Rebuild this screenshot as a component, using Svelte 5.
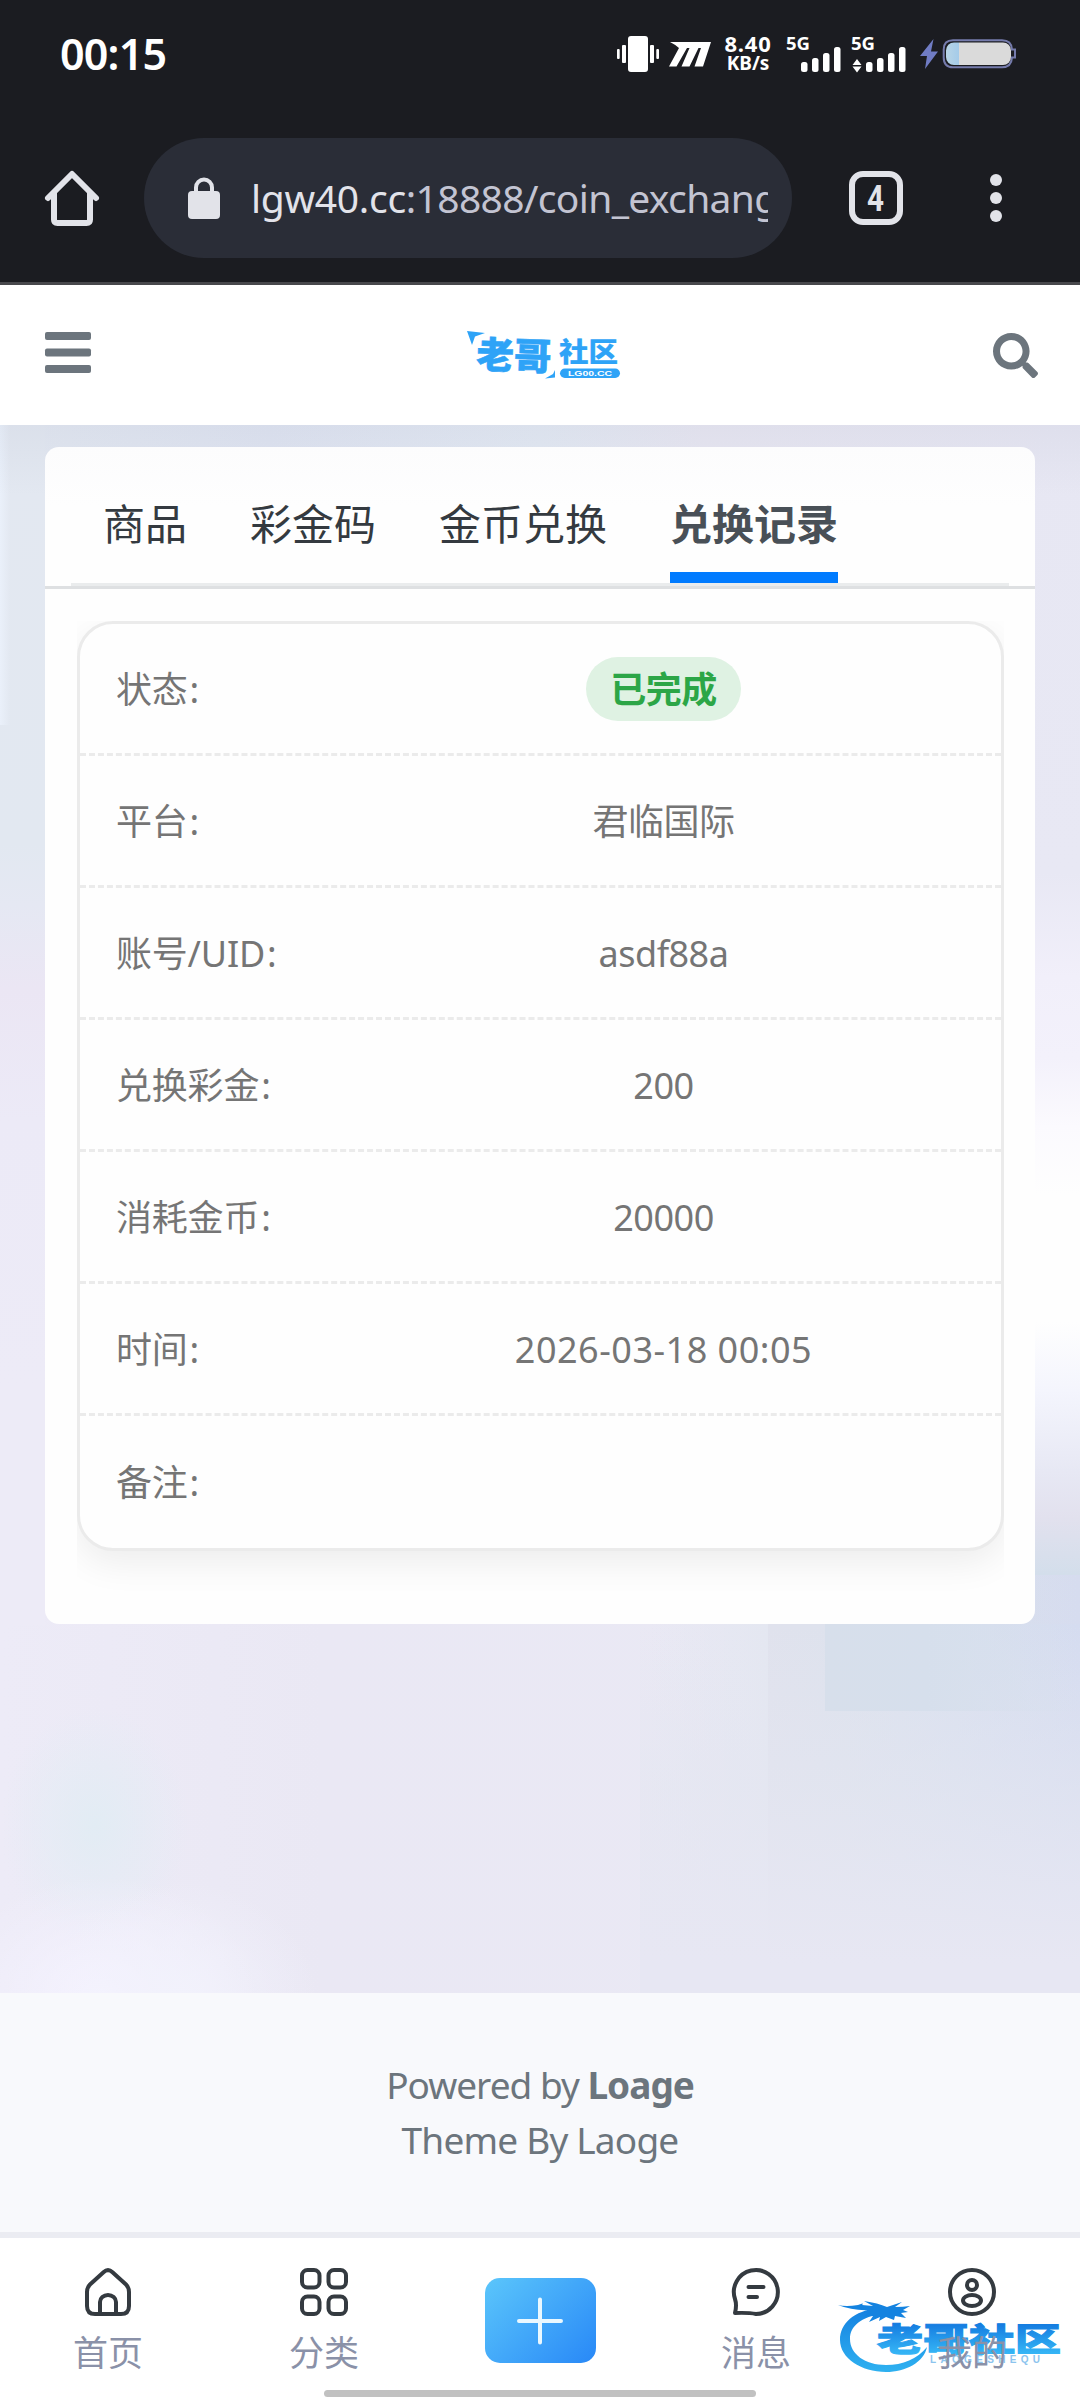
<script>
  const tabs = ['商品', '彩金码', '金币兑换', '兑换记录'];
  const activeTab = '兑换记录';

  const rows = [
    { label: '状态', value: '已完成', badge: true },
    { label: '平台', value: '君临国际' },
    { label: '账号/UID', value: 'asdf88a' },
    { label: '兑换彩金', value: '200' },
    { label: '消耗金币', value: '20000' },
    { label: '时间', value: '2026-03-18 00:05', date: true },
    { label: '备注', value: '' },
  ];
</script>

<div class="screen">
  <div class="chrome">
    <div class="status">
      <span class="clock">00:15</span>
      <div class="indicators">
        <svg class="vibrate" width="42" height="36" viewBox="0 0 42 36" fill="#fff">
          <rect x="11" y="0" width="20" height="36" rx="3" />
          <rect x="5" y="9" width="4" height="18" rx="1" />
          <rect x="0" y="13" width="2.7" height="10" rx="1" />
          <rect x="33" y="9" width="4" height="18" rx="1" />
          <rect x="39.3" y="13" width="2.7" height="10" rx="1" />
        </svg>
        <svg class="mmark" width="42" height="25" viewBox="0 0 42 25" fill="#fff">
          <path d="M1 0H42L34 24.500H25.500L32 6H29.500L20.500 24.500H12.500L20.500 6H18L7.500 24.500H0L10 6Q7 3 1 0Z" />
        </svg>
        <div class="speed"><b>8.40</b><i>KB/s</i></div>
        <svg class="signal" width="54" height="36" viewBox="0 0 54 36" fill="#fff">
          <text x="-1" y="14" class="net">5G</text>
          <rect x="14" y="26" width="6.500" height="10" rx="2.500" />
          <rect x="25" y="22" width="6.500" height="14" rx="2.500" />
          <rect x="36" y="17" width="6.500" height="19" rx="2.500" />
          <rect x="47" y="11" width="6.500" height="25" rx="2.500" />
        </svg>
        <svg class="signal two" width="54" height="36" viewBox="0 0 54 36" fill="#fff">
          <text x="-1" y="14" class="net">5G</text>
          <path d="M5 23L9.500 29H.5ZM5 36.500L.5 30.500H9.500Z" />
          <rect x="14" y="26" width="6.500" height="10" rx="2.500" />
          <rect x="25" y="22" width="6.500" height="14" rx="2.500" />
          <rect x="36" y="17" width="6.500" height="19" rx="2.500" />
          <rect x="47" y="11" width="6.500" height="25" rx="2.500" />
        </svg>
        <svg class="battery" width="98" height="30" viewBox="0 0 98 30">
          <defs>
            <linearGradient id="cell" x1="0" x2="1">
              <stop offset="0" stop-color="#b9d5e6" />
              <stop offset=".2" stop-color="#a4cbe9" />
              <stop offset=".2" stop-color="#dadada" />
            </linearGradient>
          </defs>
          <path d="M13.500 0L0 17H7L5 30L18 12.500H11Z" fill="#707cc4" />
          <path
            d="M33 1.200H82Q91.500 1.200 92 10.500H95V18.500H92Q91.500 28.300 82 28.300H33Q23.700 28.300 23.700 18.500V10.500Q23.700 1.200 33 1.200Z"
            fill="none" stroke="#757bac" stroke-width="2" />
          <rect x="26" y="3.500" width="65" height="22.500" rx="8" fill="url(#cell)" />
        </svg>
      </div>
    </div>

    <div class="toolbar">
      <svg class="home" width="54" height="56" viewBox="0 0 54 56" fill="none" stroke="#e2e3e9" stroke-width="6">
        <path d="M9 22V49.500Q9 53 12.500 53H41.500Q45 53 45 49.500V22" />
        <path d="M3 28L27 4L51 28" stroke-linecap="round" stroke-linejoin="round" />
      </svg>
      <div class="address">
        <svg width="32" height="42" viewBox="0 0 32 42">
          <rect x="0" y="14" width="32" height="28" rx="4" fill="#e2e3e9" />
          <path d="M8 16V10.500A8 8 0 0 1 24 10.500V16" fill="none" stroke="#e2e3e9" stroke-width="4" />
        </svg>
        <div class="url"><span>lgw40.cc</span>:18888/coin_exchang</div>
      </div>
      <div class="tabcount"><svg width="18" height="28" viewBox="0 0 18 28"><text class="count" x="0" y="26.500" textLength="17" lengthAdjust="spacingAndGlyphs">4</text></svg></div>
      <svg class="dots" width="12" height="48" viewBox="0 0 12 48" fill="#e2e3e9">
        <circle cx="6" cy="6" r="6" /><circle cx="6" cy="24" r="6" /><circle cx="6" cy="42" r="6" />
      </svg>
    </div>
  </div>

  <header>
    <svg class="menu" width="46" height="41" viewBox="0 0 46 41" fill="#6c757d">
      <rect width="46" height="8" rx="2" />
      <rect y="16.500" width="46" height="8" rx="2" />
      <rect y="33" width="46" height="8" rx="2" />
    </svg>
    <svg class="logo" width="154" height="50" viewBox="0 0 154 50" fill="#2ea3f7">
      <path d="M0 0L18 2L8 5.500L5 14Z" />
      <path d="M88 39V46.500L78 47.500L86 43Z" />
      <text class="brand big" transform="translate(9 37) rotate(2)" textLength="75" lengthAdjust="spacingAndGlyphs">老哥</text>
      <text class="brand small" transform="translate(92 31)" textLength="59" lengthAdjust="spacingAndGlyphs">社区</text>
      <rect x="93" y="37.500" width="60" height="9.500" rx="4.750" />
      <text class="domain" x="101" y="45" textLength="44" lengthAdjust="spacingAndGlyphs">LG00.CC</text>
    </svg>
    <svg class="search" width="45" height="45" viewBox="0 0 512 512" fill="#6c757d">
      <path d="M505 442.700L405.300 343c-4.500-4.500-10.600-7-17-7H372c27.600-35.300 44-79.700 44-128C416 93.100 322.900 0 208 0S0 93.100 0 208s93.100 208 208 208c48.300 0 92.700-16.400 128-44v16.300c0 6.400 2.500 12.500 7 17l99.700 99.700c9.400 9.400 24.600 9.400 33.900 0l28.300-28.300c9.400-9.400 9.400-24.600.1-34zM208 336c-70.700 0-128-57.200-128-128 0-70.700 57.200-128 128-128 70.700 0 128 57.200 128 128 0 70.700-57.200 128-128 128z" />
    </svg>
  </header>

  <main>
    <section class="panel">
      <div class="tabbar">
        <nav class="tabs">
          {#each tabs as tab}
            <span class:active={tab === activeTab}>{tab}</span>
          {/each}
        </nav>
      </div>
      <div class="clip">
        <div class="record">
          {#each rows as row}
            <div class="row">
              <span class="label">{row.label}<em>:</em></span>
              <span class="value" class:date={row.date}>
                {#if row.badge}<b class="badge">{row.value}</b>{:else}{row.value}{/if}
              </span>
            </div>
          {/each}
        </div>
      </div>
    </section>
  </main>

  <footer>
    <p class="powered">Powered by <b>Loage</b></p>
    <p class="theme">Theme By Laoge</p>
  </footer>

  <div class="bottom">
    <svg class="watermark" width="224" height="78" viewBox="0 0 224 78">
      <defs>
        <linearGradient id="wm" gradientUnits="userSpaceOnUse" x1="0" y1="8" x2="0" y2="72">
          <stop offset="0" stop-color="#147fe0" />
          <stop offset="1" stop-color="#2eb0f0" />
        </linearGradient>
        <linearGradient id="wt" gradientUnits="userSpaceOnUse" x1="0" y1="-32" x2="0" y2="2">
          <stop offset="0" stop-color="#147be0" />
          <stop offset="1" stop-color="#35b4f5" />
        </linearGradient>
      </defs>
      <path d="M40 10C16 13 2 25 2 42C2 60 23 74 48 74C68 74 86 64 89 49C79 61 65 67 48 67C27 67 12 56 12 41C12 28 23 19 44 16Z" fill="url(#wm)" />
      <path d="M0 7Q8 9 20 7Q27 4 24 7L35 8L26 3Q40 5 49 9L64 4L57 9Q65 9 72 8L65 12L70 14L63 15L68 20L57 18L56 22L48 19L41 23L42 19L31 24L35 18L27 18L32 12Q15 13 0 7Z" fill="#1483e0" />
      <g transform="translate(39 53) scale(1 .86)">
        <text class="wmtext" textLength="184" lengthAdjust="spacingAndGlyphs">老哥社区</text>
      </g>
      <text class="wmsub" x="92" y="65" textLength="110">LAOGESHEQU</text>
    </svg>
    <div class="item">
      <svg width="48" height="48" viewBox="0 0 48 48" fill="none" stroke="#343a40" stroke-width="4">
        <path d="M19.500 4.200Q24 0 28.500 4.200L42 16.500Q45 19.500 45 24V38Q45 46 37 46H11Q3 46 3 38V24Q3 19.500 6 16.500Z" />
        <path d="M16 46V34A8 7 0 0 1 32 34V46" />
      </svg>
      <span>首页</span>
    </div>
    <div class="item">
      <svg width="48" height="48" viewBox="0 0 48 48" fill="none" stroke="#343a40" stroke-width="4">
        <rect x="2" y="2" width="17.500" height="17.500" rx="5.500" />
        <rect x="28.500" y="2" width="17.500" height="17.500" rx="5.500" />
        <rect x="2" y="28.500" width="17.500" height="17.500" rx="5.500" />
        <rect x="28.500" y="28.500" width="17.500" height="17.500" rx="5.500" />
      </svg>
      <span>分类</span>
    </div>
    <div class="item">
      <div class="plus">
        <svg width="48" height="48" viewBox="0 0 48 48" stroke="#eaf8ff" stroke-width="4" stroke-linecap="round">
          <path d="M3 24H45M24 2.500V45.500" />
        </svg>
      </div>
    </div>
    <div class="item">
      <svg width="48" height="48" viewBox="0 0 48 48" fill="none" stroke="#343a40" stroke-width="4" stroke-linecap="round" stroke-linejoin="round">
        <path d="M3 45Q5 37 3 31A22 22 0 1 1 24 46Q17 44.500 3 45Z" />
        <path d="M16.500 19H31.500M16.500 29H25" />
      </svg>
      <span>消息</span>
    </div>
    <div class="item">
      <svg width="48" height="48" viewBox="0 0 48 48" fill="none" stroke="#343a40" stroke-width="4">
        <circle cx="24" cy="24" r="22" />
        <circle cx="24" cy="17" r="5" />
        <ellipse cx="24" cy="32.500" rx="9" ry="5.500" />
      </svg>
      <span>我的</span>
    </div>
    <div class="gesture"></div>
  </div>
</div>

<style>
  :global(body) {
    background: #fff;
  }
  .screen {
    width: 1080px;
    height: 2400px;
    overflow: hidden;
    display: flex;
    flex-direction: column;
    font-family: 'Noto Sans', 'Noto Sans CJK SC', sans-serif;
  }
  svg {
    display: block;
    flex: none;
    overflow: visible;
  }

  .chrome {
    box-sizing: border-box;
    height: 285px;
    flex: none;
    background: #1b1c21;
    border-bottom: 3px solid #48484c;
  }
  .status {
    height: 108px;
    display: flex;
    justify-content: space-between;
    align-items: center;
    padding: 0 62px 0 60px;
  }
  .clock {
    color: #fff;
    font-size: 43px;
    font-weight: 600;
    line-height: 60px;
    letter-spacing: -0.8px;
  }
  .indicators {
    display: flex;
    align-items: center;
  }
  .mmark {
    margin-left: 10px;
  }
  .speed {
    width: 48px;
    margin-left: 13px;
    display: flex;
    flex-direction: column;
    align-items: center;
    color: #fff;
    font-weight: 700;
  }
  .speed b {
    font-size: 22px;
    line-height: 19px;
    font-weight: 700;
    letter-spacing: 0.8px;
    margin-top: -1px;
  }
  .speed i {
    font-size: 19px;
    line-height: 20px;
    font-style: normal;
  }
  .net {
    font-size: 18.500px;
    font-weight: 700;
  }
  .signal {
    margin-left: 15px;
  }
  .signal.two {
    margin-left: 11px;
  }
  .battery {
    margin-left: 14px;
  }

  .toolbar {
    display: flex;
    align-items: center;
    padding: 30px 0 0 45px;
    height: 120px;
  }
  .address {
    margin-left: 45px;
    width: 648px;
    height: 120px;
    border-radius: 60px;
    background: #2a2d37;
    box-sizing: border-box;
    display: flex;
    align-items: center;
    padding: 0 24px 0 44px;
  }
  .url {
    margin-left: 31px;
    flex: 1;
    overflow: hidden;
    white-space: nowrap;
    font-size: 39px;
    line-height: 62px;
    color: #c3c4d2;
    letter-spacing: -0.65px;
  }
  .url span {
    color: #e2e3ea;
    letter-spacing: -0.3px;
  }
  .tabcount {
    box-sizing: border-box;
    width: 54px;
    height: 54px;
    margin-left: 57px;
    border: 6px solid #e2e3e9;
    border-radius: 14px;
    display: flex;
    align-items: center;
    justify-content: center;
  }
  .count {
    font: 700 37px 'Roboto', sans-serif;
    fill: #e2e3e9;
  }
  .dots {
    margin-left: 87px;
  }

  header {
    box-sizing: border-box;
    height: 140px;
    flex: none;
    background: #fff;
    display: flex;
    align-items: flex-start;
    justify-content: space-between;
    padding: 47px 42px 0 45px;
  }
  .logo {
    margin: -1px 0 0 3px;
  }
  .brand {
    font-family: 'Noto Sans CJK SC', sans-serif;
    font-weight: 900;
    stroke: #2ea3f7;
  }
  .brand.big {
    font-size: 37px;
    stroke-width: 0.600;
  }
  .brand.small {
    font-size: 27px;
    stroke-width: 0.200;
  }
  .domain {
    font: 700 8px 'Liberation Sans', sans-serif;
    fill: #fff;
  }
  .search {
    margin-top: 1px;
  }

  main {
    box-sizing: border-box;
    height: 1568px;
    flex: none;
    padding: 22px 45px 0;
    background:
      linear-gradient(180deg, rgba(110, 120, 150, 0.07), rgba(110, 120, 150, 0) 70px),
      linear-gradient(90deg, #eaf0fa, #e9effa00 10px) 0 0 / 20px 300px no-repeat,
      radial-gradient(ellipse at 50% 100%, #f2f2fc, #f2f2fc00 70%) 40px 1455px / 280px 120px no-repeat,
      radial-gradient(ellipse at 50% 100%, #f5f3ff, #f3f2fd00 70%) -60px 1450px / 320px 120px no-repeat,
      radial-gradient(ellipse at center, #e2ecf4, #e4ecf500 70%) 0 1280px / 190px 240px no-repeat,
      linear-gradient(90deg, #d7dfeb, #d6dfec 40%, #d5ddef00) 825px 1150px / 255px 136px no-repeat,
      linear-gradient(180deg, #e7e7f300, #e4e6f199 45%, #e7e7f3 92%) 640px 1199px / 440px 369px no-repeat,
      linear-gradient(90deg, #e0e2ed, #dde2ed 25%, #d9e0ef 60%, #d5dcf0) 768px 1199px / 312px 369px no-repeat,
      linear-gradient(90deg, #e0e2ed, #d6dcef) 768px 1150px / 312px 49px no-repeat,
      linear-gradient(90deg, #e8e8f400, #e4e7f1) 650px 1150px / 118px 418px no-repeat,
      linear-gradient(180deg, #e7e7f3, #e8e8f4 39%, #f1effa 48%, #f3f1fb 55%, #fbfafe 61%, #fefefe 67%, #fefefe 78%, #f4f5fd 84%, #e7e8f4 91%, #e2e1ee 95%, #d3deeb) 1035px 0 / 45px 1150px no-repeat,
      linear-gradient(180deg, #e3e8f1, #e2e8f1 35%, #e5e8f3 40%, #ebe6f4 47%, #eceaf7 58%, #edebf7 80%) 0 0 / 45px 1200px no-repeat,
      linear-gradient(90deg, #e3e8f1, #dfe4f1 25%, #e3e9f3 50%, #e8e7f2 65%, #e7e7f3) 0 0 / 100% 40px no-repeat,
      linear-gradient(90deg, #edebf7, #eae8f4 30%, #e9e9f4);
  }
  .panel {
    height: 1177px;
    background: linear-gradient(#fcfcfd, #fefefe 60px);
    border-radius: 14px;
    display: flex;
    flex-direction: column;
  }
  .tabbar {
    height: 139px;
    flex: none;
    border-bottom: 3px solid #dee0e2;
    padding: 0 26px;
    display: flex;
  }
  .tabs {
    flex: 1;
    display: flex;
    align-items: flex-end;
    gap: 63px;
    padding-left: 32px;
    border-bottom: 3px solid #eaeced;
  }
  .tabs span {
    font-size: 42px;
    line-height: 60px;
    padding-bottom: 18px;
    border-bottom: 11px solid transparent;
    color: #343a40;
  }
  .tabs .active {
    font-weight: 700;
    color: #495057;
    border-color: #007bff;
  }

  .clip {
    margin: 32px 31px 0 32px;
    padding-bottom: 50px;
    overflow: hidden;
  }
  .record {
    box-sizing: border-box;
    height: 930px;
    border: 3px solid #ebebeb;
    border-radius: 36px;
    background: #fefefe;
    box-shadow: 0 12px 36px rgba(0, 0, 0, 0.07);
  }
  .row {
    box-sizing: border-box;
    height: 132px;
    display: flex;
    align-items: center;
    border-bottom: 3px dashed #ebebeb;
    padding: 2px 36px 0;
    font-size: 36px;
    line-height: 54px;
    color: #757575;
  }
  .row:last-child {
    border-bottom: 0;
  }
  .label {
    width: 249px;
    flex: none;
    white-space: nowrap;
    letter-spacing: -0.2px;
  }
  .label em {
    font-style: normal;
    margin-left: 2px;
  }
  .value {
    flex: 1;
    text-align: center;
    letter-spacing: -0.5px;
    margin-right: 3px;
  }
  .value.date {
    letter-spacing: 0.500px;
  }
  .badge {
    display: inline-block;
    height: 64px;
    line-height: 66px;
    padding: 0 24px;
    border-radius: 32px;
    background: #dff2e3;
    color: #2ca647;
    letter-spacing: -0.500px;
    margin-bottom: 2px;
  }

  footer {
    box-sizing: border-box;
    height: 239px;
    flex: none;
    background: #f8f9fc;
    padding-top: 64px;
    text-align: center;
    font-size: 37px;
    line-height: 55px;
    color: #6c757d;
  }
  p {
    margin: 0;
  }
  .powered {
    letter-spacing: -1px;
  }
  .theme {
    letter-spacing: -0.8px;
  }

  .bottom {
    position: relative;
    box-sizing: border-box;
    height: 168px;
    flex: none;
    display: flex;
    background: #fff;
    border-top: 6px solid #ebecf2;
  }
  .item {
    position: relative;
    width: 216px;
    display: flex;
    flex-direction: column;
    align-items: center;
    padding-top: 30px;
  }
  .item span {
    margin-top: 10px;
    font-size: 35px;
    line-height: 54px;
    color: #8a91a8;
  }
  .plus {
    margin-top: 10px;
    width: 111px;
    height: 85px;
    border-radius: 15px;
    background: linear-gradient(135deg, #5bc6fb, #2888f7);
    display: flex;
    align-items: center;
    justify-content: center;
  }
  .gesture {
    position: absolute;
    left: 324px;
    top: 152px;
    width: 432px;
    height: 7px;
    border-radius: 4px;
    background: #c1c1c1;
  }
  .watermark {
    position: absolute;
    left: 838px;
    top: 60px;
  }
  .wmtext {
    font-family: 'Noto Sans CJK SC', sans-serif;
    font-size: 37px;
    font-weight: 900;
    fill: url(#wt);
    stroke: url(#wt);
    stroke-width: 1.200;
  }
  .wmsub {
    font: 700 10px 'Liberation Sans', sans-serif;
    fill: #8cc4ee;
  }
</style>
